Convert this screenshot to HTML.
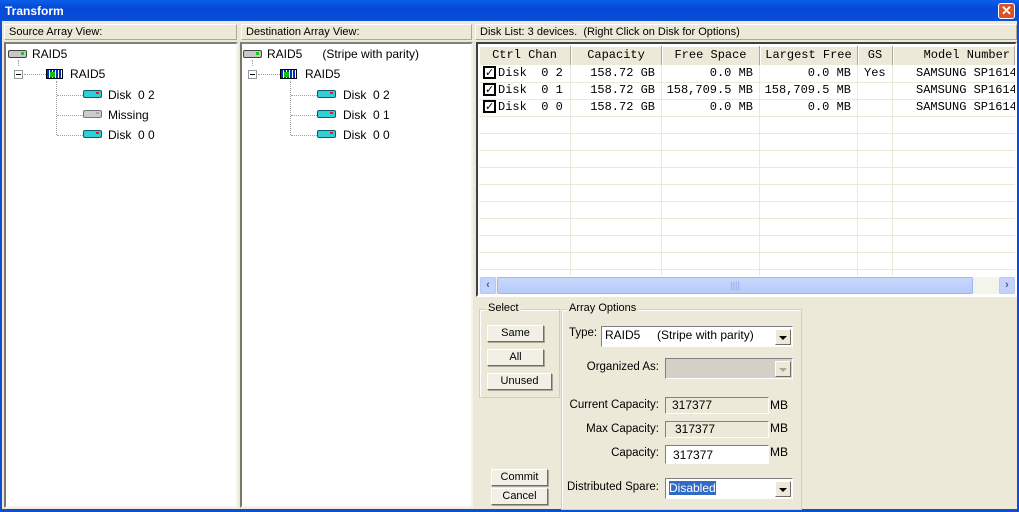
<!DOCTYPE html>
<html><head><style>
*{margin:0;padding:0;box-sizing:border-box}
body{width:1019px;height:512px;overflow:hidden;background:#ece9d8;font-family:"Liberation Sans",sans-serif;font-size:11px;color:#000;position:relative}
.a{position:absolute}
.title{left:0;top:0;width:1019px;height:21px;background:linear-gradient(#0a5fe8,#0548d8 40%,#0a4fd6);color:#fff;font-weight:bold;font-size:12px;padding:4px 0 0 5px}
.hdr{background:#ece9d8;border:1px solid;border-color:#fff #aca899 #aca899 #fff;height:16px;padding:1px 0 0 4px;white-space:nowrap;overflow:hidden}
.well{background:#fff;border:2px solid;border-color:#808080 #f4f3ee #f4f3ee #808080;border-left-color:#7a7868}
.mono{font-family:"Liberation Mono",monospace;font-size:12px}
.btn{background:#f2f0e6;border:1px solid;border-color:#fff #716f64 #716f64 #fff;box-shadow:1px 1px 0 #aca899;text-align:center;line-height:15px}
.grp{border:1px solid #d0d0bf;box-shadow:inset 1px 1px 0 #fff}
.gl{background:#ece9d8;padding:0 2px}
.fld{border:1px solid;border-color:#808080 #fff #fff #808080;padding-left:6px;line-height:15px}
.dd{width:16px;height:16px;background:#ece9d8;border:1px solid;border-color:#fff #716f64 #716f64 #fff}
.dd:after{content:"";position:absolute;left:3px;top:6px;border:4px solid transparent;border-top:4px solid #000;border-bottom:0}
.dis:after{border-top-color:#aca899}
.dot{border-top:1px dotted #a0a0a0}
.vdot{border-left:1px dotted #a0a0a0}
.disk{width:19px;height:8px;background:#30d0d8;border:1px solid #0a5a70;border-radius:2px}
.disk:after{content:"";position:absolute;right:2px;top:1px;width:3px;height:2px;background:#e02020}
.gdisk{background:#ccc;border-color:#777}
.gdisk:after{background:#aaa}
.hd{width:19px;height:8px;background:#c8c8c8;border:1px solid #444;border-radius:2px}
.hd:after{content:"";position:absolute;right:2px;top:1px;width:3px;height:3px;background:#10d010}
.arr{width:17px;height:10px;background:repeating-linear-gradient(90deg,#0030c0 0 2px,#fff 2px 3px);border:1px solid #000}
.arr:after{content:"";position:absolute;left:3px;top:2px;width:5px;height:5px;background:#10c010}
.tg{width:9px;height:9px;border:1px solid #919b9c;background:#fff}
.tg:after{content:"";position:absolute;left:1px;top:3px;width:5px;height:1px;background:#000}
.ch{width:13px;height:13px;border:2px solid #000;background:#fff;font-family:"DejaVu Sans",sans-serif;font-size:11px;line-height:9px;text-align:center;font-weight:bold}
.col{top:46px;height:19px;border-right:1px solid #aca899;background:#ece9d8;text-align:center;line-height:19px;box-shadow:inset 1px 1px 0 #fff}
.vl{top:65px;width:1px;height:211px;background:#ece9d8}
.hl{left:479px;width:536px;height:1px;background:#ece9d8}
.r{text-align:right}
.lb{text-align:right;width:150px;font-size:11.5px}
</style></head><body>
<div class="a title">Transform</div>
<div class="a" style="left:998px;top:3px;width:17px;height:16px;background:#d8532c;border:1px solid #fff;border-radius:3px;color:#fff;font-weight:bold;font-size:13px;line-height:13px;text-align:center">✕</div>
<div class="a" style="left:0;top:21px;width:2px;height:491px;background:#0a4fd6"></div>
<div class="a" style="left:1017px;top:21px;width:2px;height:491px;background:#0a4fd6"></div>
<div class="a" style="left:0;top:509px;width:1019px;height:3px;background:#0a4fd6"></div>

<div class="a hdr" style="left:4px;top:24px;width:233px">Source Array View:</div>
<div class="a well" style="left:4px;top:42px;width:234px;height:466px"></div>
<div class="a hd" style="left:8px;top:50px"></div><div class="a" style="left:32px;top:47px;font-size:12px">RAID5</div>
<div class="a vdot" style="left:18px;top:60px;height:6px"></div>
<div class="a tg" style="left:14px;top:70px"></div>
<div class="a dot" style="left:24px;top:74px;width:22px"></div>
<div class="a arr" style="left:46px;top:69px"></div><div class="a" style="left:70px;top:67px;font-size:12px">RAID5</div>
<div class="a vdot" style="left:56px;top:81px;height:54px"></div>
<div class="a dot" style="left:57px;top:95px;width:26px"></div><div class="a disk" style="left:83px;top:90px"></div><div class="a" style="left:108px;top:88px;font-size:12px">Disk&nbsp; 0 2</div>
<div class="a dot" style="left:57px;top:115px;width:26px"></div><div class="a disk gdisk" style="left:83px;top:110px"></div><div class="a" style="left:108px;top:108px;font-size:12px">Missing</div>
<div class="a dot" style="left:57px;top:135px;width:26px"></div><div class="a disk" style="left:83px;top:130px"></div><div class="a" style="left:108px;top:128px;font-size:12px">Disk&nbsp; 0 0</div>

<div class="a hdr" style="left:241px;top:24px;width:231px">Destination Array View:</div>
<div class="a well" style="left:240px;top:42px;width:233px;height:466px"></div>
<div class="a hd" style="left:243px;top:50px"></div><div class="a" style="left:267px;top:47px;font-size:12px">RAID5&nbsp;&nbsp;&nbsp;&nbsp;&nbsp; (Stripe with parity)</div>
<div class="a vdot" style="left:252px;top:60px;height:6px"></div>
<div class="a tg" style="left:248px;top:70px"></div>
<div class="a dot" style="left:258px;top:74px;width:22px"></div>
<div class="a arr" style="left:280px;top:69px"></div><div class="a" style="left:305px;top:67px;font-size:12px">RAID5</div>
<div class="a vdot" style="left:290px;top:81px;height:54px"></div>
<div class="a dot" style="left:291px;top:95px;width:26px"></div><div class="a disk" style="left:317px;top:90px"></div><div class="a" style="left:343px;top:88px;font-size:12px">Disk&nbsp; 0 2</div>
<div class="a dot" style="left:291px;top:115px;width:26px"></div><div class="a disk" style="left:317px;top:110px"></div><div class="a" style="left:343px;top:108px;font-size:12px">Disk&nbsp; 0 1</div>
<div class="a dot" style="left:291px;top:135px;width:26px"></div><div class="a disk" style="left:317px;top:130px"></div><div class="a" style="left:343px;top:128px;font-size:12px">Disk&nbsp; 0 0</div>

<div class="a hdr" style="left:475px;top:24px;width:542px">Disk List: 3 devices.&nbsp; (Right Click on Disk for Options)</div>
<div class="a" style="left:476px;top:42px;width:541px;height:255px;background:#fff;border:2px solid;border-color:#404040 #fff #fff #404040"></div>
<div class="a col mono" style="left:479px;width:92px">Ctrl Chan</div>
<div class="a col mono" style="left:571px;width:91px">Capacity</div>
<div class="a col mono" style="left:662px;width:98px">Free Space</div>
<div class="a col mono" style="left:760px;width:98px">Largest Free</div>
<div class="a col mono" style="left:858px;width:35px">GS</div>
<div class="a col mono" style="left:893px;width:122px;text-align:right;padding-right:4px;overflow:hidden">Model Number</div>
<div class="a vl" style="left:570px"></div><div class="a vl" style="left:661px"></div><div class="a vl" style="left:759px"></div><div class="a vl" style="left:857px"></div><div class="a vl" style="left:892px"></div>
<div class="a hl" style="top:82px"></div><div class="a hl" style="top:99px"></div><div class="a hl" style="top:116px"></div><div class="a hl" style="top:133px"></div><div class="a hl" style="top:150px"></div><div class="a hl" style="top:167px"></div><div class="a hl" style="top:184px"></div><div class="a hl" style="top:201px"></div><div class="a hl" style="top:218px"></div><div class="a hl" style="top:235px"></div><div class="a hl" style="top:252px"></div><div class="a hl" style="top:269px"></div>
<div class="mono">
<div class="a ch" style="left:483px;top:66px">✓</div><div class="a" style="left:498px;top:66px">Disk&nbsp; 0 2</div>
<div class="a r" style="left:571px;top:66px;width:84px">158.72 GB</div><div class="a r" style="left:662px;top:66px;width:91px">0.0 MB</div><div class="a r" style="left:760px;top:66px;width:91px">0.0 MB</div><div class="a" style="left:864px;top:66px">Yes</div><div class="a" style="left:916px;top:66px;width:99px;overflow:hidden;white-space:nowrap">SAMSUNG SP1614C</div>
<div class="a ch" style="left:483px;top:83px">✓</div><div class="a" style="left:498px;top:83px">Disk&nbsp; 0 1</div>
<div class="a r" style="left:571px;top:83px;width:84px">158.72 GB</div><div class="a r" style="left:662px;top:83px;width:91px">158,709.5 MB</div><div class="a r" style="left:760px;top:83px;width:91px">158,709.5 MB</div><div class="a" style="left:916px;top:83px;width:99px;overflow:hidden;white-space:nowrap">SAMSUNG SP1614C</div>
<div class="a ch" style="left:483px;top:100px">✓</div><div class="a" style="left:498px;top:100px">Disk&nbsp; 0 0</div>
<div class="a r" style="left:571px;top:100px;width:84px">158.72 GB</div><div class="a r" style="left:662px;top:100px;width:91px">0.0 MB</div><div class="a r" style="left:760px;top:100px;width:91px">0.0 MB</div><div class="a" style="left:916px;top:100px;width:99px;overflow:hidden;white-space:nowrap">SAMSUNG SP1614C</div>
</div>
<div class="a" style="left:479px;top:277px;width:536px;height:17px;background:#f5f4ea"></div>
<div class="a" style="left:480px;top:277px;width:16px;height:17px;background:#c4d3fb;border:1px solid #b7c8f5;border-radius:2px;color:#4d6185;font-weight:bold;text-align:center;line-height:14px">‹</div>
<div class="a" style="left:497px;top:277px;width:476px;height:17px;background:linear-gradient(#c9d8fc,#b6cafa);border:1px solid #9fb6ef;border-radius:2px;color:#8fa8e8;text-align:center;line-height:14px;font-size:9px">||||</div>
<div class="a" style="left:999px;top:277px;width:16px;height:17px;background:#c4d3fb;border:1px solid #b7c8f5;border-radius:2px;color:#4d6185;font-weight:bold;text-align:center;line-height:14px">›</div>

<div class="a grp" style="left:479px;top:309px;width:81px;height:89px"></div>
<div class="a gl" style="left:486px;top:302px">Select</div>
<div class="a btn" style="left:487px;top:325px;width:57px;height:17px">Same</div>
<div class="a btn" style="left:487px;top:349px;width:57px;height:17px">All</div>
<div class="a btn" style="left:487px;top:373px;width:65px;height:17px">Unused</div>
<div class="a btn" style="left:491px;top:469px;width:57px;height:17px">Commit</div>
<div class="a btn" style="left:491px;top:488px;width:57px;height:17px">Cancel</div>

<div class="a grp" style="left:561px;top:309px;width:241px;height:201px"></div>
<div class="a gl" style="left:567px;top:302px">Array Options</div>
<div class="a" style="left:569px;top:327px;font-size:11.5px">Type:</div>
<div class="a fld" style="left:601px;top:326px;width:192px;height:21px;background:#fff;font-size:12px;line-height:17px;padding-left:3px">RAID5&nbsp;&nbsp;&nbsp;&nbsp; (Stripe with parity)</div>
<div class="a dd" style="left:775px;top:329px"></div>
<div class="a lb" style="left:509px;top:361px">Organized As:</div>
<div class="a fld" style="left:665px;top:358px;width:128px;height:21px;background:#d4d0c8"></div>
<div class="a dd dis" style="left:775px;top:361px"></div>
<div class="a lb" style="left:509px;top:399px">Current Capacity:</div>
<div class="a fld" style="left:665px;top:397px;width:104px;height:17px;font-size:12px">317377</div>
<div class="a" style="left:770px;top:398px;font-size:12px">MB</div>
<div class="a lb" style="left:509px;top:423px">Max Capacity:</div>
<div class="a fld" style="left:665px;top:421px;width:104px;height:17px;font-size:12px;padding-left:9px">317377</div>
<div class="a" style="left:770px;top:421px;font-size:12px">MB</div>
<div class="a lb" style="left:509px;top:447px">Capacity:</div>
<div class="a fld" style="left:665px;top:445px;width:104px;height:19px;background:#fff;font-size:12px;padding-left:7px;line-height:18px">317377</div>
<div class="a" style="left:770px;top:445px;font-size:12px">MB</div>
<div class="a lb" style="left:509px;top:481px">Distributed Spare:</div>
<div class="a fld" style="left:665px;top:478px;width:128px;height:21px;background:#fff;padding-left:3px;padding-top:2px"><span style="background:#316ac5;color:#fff;font-size:12px;line-height:14px;display:inline-block">Disabled</span></div>
<div class="a dd" style="left:775px;top:481px"></div>
</body></html>
